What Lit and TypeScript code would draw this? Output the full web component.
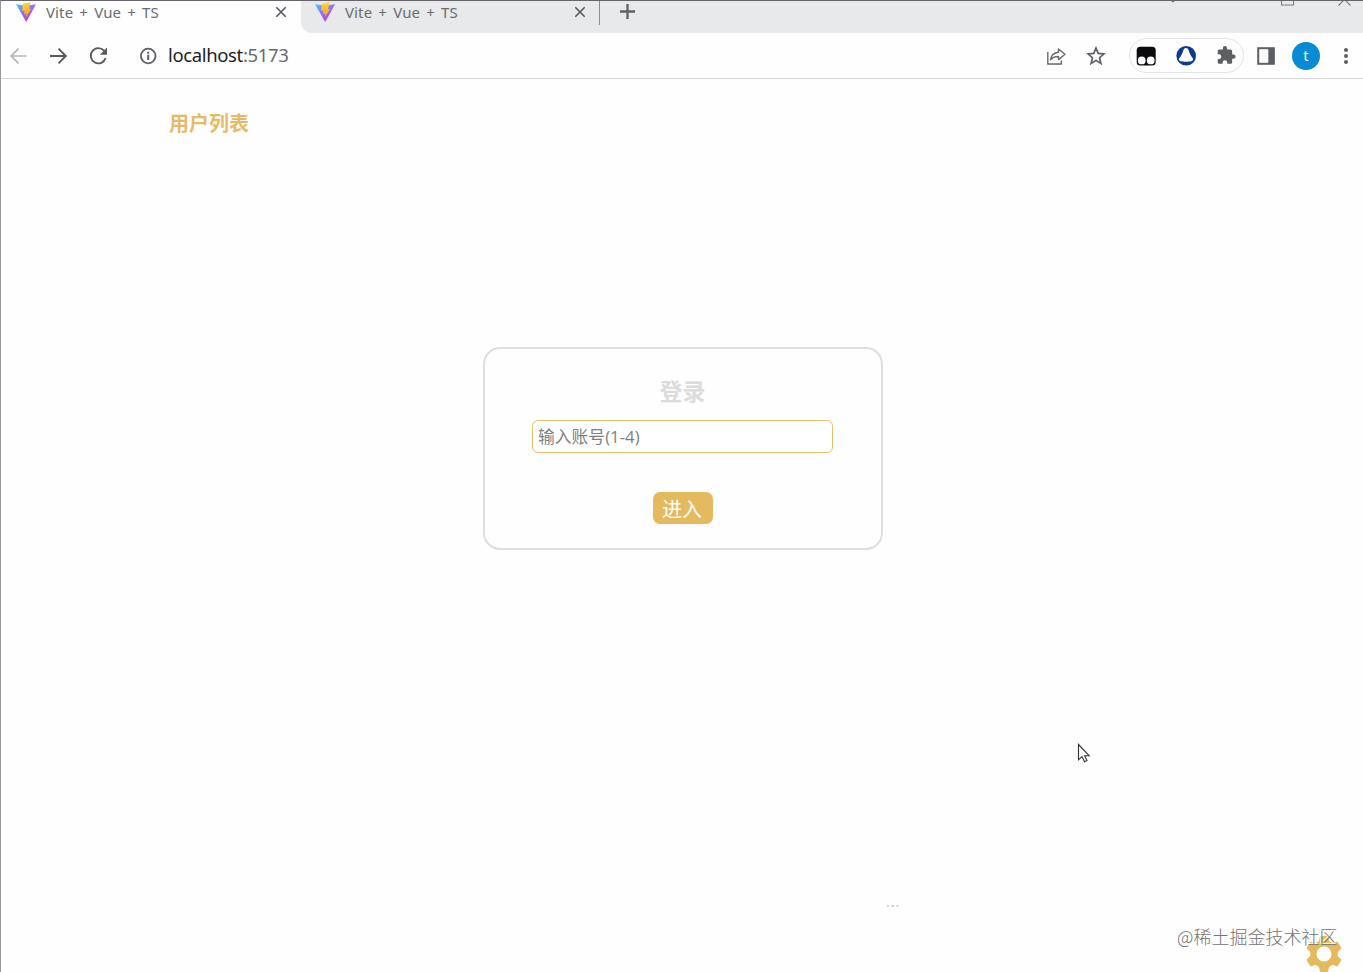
import { LitElement, html, css, svg } from "lit";
import { customElement, property } from "lit/decorators.js";

@customElement("vite-tab")
class ViteTab extends LitElement {
  @property() label = "";

  static styles = css`
    :host { display: flex; align-items: center; box-sizing: border-box; height: 22px; font: 15px/22px "Noto Sans", sans-serif; color: #696c70; }
    .logo { width: 22px; height: 22px; flex: none; }
    .title { flex: 1; margin-left: 9px; white-space: nowrap; letter-spacing: 0.12px; word-spacing: 2.1px; }
    .close { width: 12px; height: 12px; flex: none; }
  `;

  render() {
    return html`
      <svg class="logo" viewBox="0 0 22 22">
        <defs>
          <linearGradient id="body" x1="0" y1="0" x2=".65" y2="1">
            <stop offset="0" stop-color="#41c7ff" /><stop offset=".5" stop-color="#9170ff" /><stop offset="1" stop-color="#bd34d6" />
          </linearGradient>
          <linearGradient id="bolt" x1=".4" y1="0" x2=".6" y2="1">
            <stop offset="0" stop-color="#ffd43a" /><stop offset="1" stop-color="#f9a41b" />
          </linearGradient>
        </defs>
        <path d="M1 3.2 L11 4.7 L21 3.2 L11.2 21 Z" fill="url(#body)" />
        <path d="M15.5 1.2 L8 2.8 L7 9.8 L9.6 9.4 L9 13.2 L11.4 12.4 L10.7 16.4 L16.4 7.8 L14 8.2 Z" fill="url(#bolt)" />
      </svg>
      <span class="title">${this.label}</span>
      <svg class="close" viewBox="0 0 12 12"><path d="M1.3 1.3 L10.7 10.7 M10.7 1.3 L1.3 10.7" stroke="#55585c" stroke-width="1.6" /></svg>
    `;
  }
}

@customElement("app-root")
class AppRoot extends LitElement {
  static styles = css`
    :host { display: block; height: 972px; overflow: hidden; position: relative; font-family: "Noto Sans", "Noto Sans CJK SC", sans-serif; }
    * { box-sizing: border-box; }
    svg { display: block; flex: none; }
    .window { height: 972px; display: flex; flex-direction: column; border-top: 1px solid #66646a; border-left: 1px solid #98979b; background: #fefefe; }
    .tabs { display: flex; height: 32px; flex: none; }
    .active { width: 300px; padding: 0 14px 0 14px; }
    .strip { flex: 1; display: flex; background: #e8e9eb; border-bottom-left-radius: 11px; }
    .second { width: 298px; padding: 0 13px 0 13px; }
    .divider { width: 1px; height: 24px; background: #8b8d90; }
    .plus { margin: 2px 0 0 19px; }
    .controls { margin-left: auto; }
    .toolbar { display: flex; align-items: center; height: 46px; flex: none; border-bottom: 1px solid #d5d6d8; padding: 0 14px 0 7px; }
    .nav { display: flex; gap: 20px; }
    .info { margin-left: 31px; }
    .url { margin: 0 0 2px 11px; font: 18.5px/30px "Noto Sans", sans-serif; color: #202124; letter-spacing: -0.36px; white-space: nowrap; }
    .port { color: #67696d; }
    .actions { margin-left: auto; display: flex; align-items: center; }
    .share { margin-right: 20px; }
    .extensions { display: flex; align-items: center; gap: 20px; width: 115px; height: 35px; margin: 0 12px 0 23px; padding: 0 6px; border: 1px solid #e2e3e6; border-radius: 18px; }
    .avatar { width: 28px; height: 28px; margin: 0 23px 0 16px; border-radius: 50%; background: #078bd5; color: #fff; font: 15px/27px "Noto Sans", sans-serif; text-align: center; }
    .page { flex: 1; min-height: 0; display: flex; flex-direction: column; }
    .heading { margin: 28px 0 0 168px; font: 700 20px/32px "Noto Sans CJK SC", sans-serif; color: #e5bb67; }
    .card { width: 400px; height: 203px; margin: 208px 0 0 482px; border: 2px solid #dedede; border-radius: 17px; display: flex; flex-direction: column; align-items: center; padding-top: 24px; }
    .title { margin-right: 1px; font: 700 23px/34px "Noto Sans CJK SC", sans-serif; color: #dcdcdc; }
    .field { width: 301px; height: 33px; margin: 13px 1px 0 0; padding: 0 5px 1px; border: 1px solid #e8bf69; border-radius: 6px; outline: 0; background: #fff; font: 16.8px/30px "Open Sans", "Noto Sans CJK SC", sans-serif; color: #555; }
    .field::placeholder { color: #7f7f7f; opacity: 1; font-weight: 400; }
    .enter { width: 60px; height: 32px; margin-top: 39px; padding: 2px 2px 0 0; border: 0; border-radius: 7px; background: #e5b95e; color: #fff; font: 400 20px/30px "Noto Sans CJK SC", sans-serif; }
    .cursor { position: absolute; left: 1077px; top: 743px; }
    .dots { position: absolute; left: 886px; top: 904px; }
    .gear { position: absolute; left: 1306px; top: 936px; }
    .watermark { position: absolute; left: 1177px; top: 923px; font: 300 18px/27px "Noto Sans CJK SC", sans-serif; color: #737373; text-shadow: -1px -1px 0 #fff; white-space: nowrap; }
  `;

  private gearTeeth = [0, 60, 120, 180, 240, 300];

  render() {
    return html`
      <div class="window">
        <div class="tabs">
          <vite-tab class="active" label="Vite + Vue + TS"></vite-tab>
          <div class="strip">
            <vite-tab class="second" label="Vite + Vue + TS"></vite-tab>
            <div class="divider"></div>
            <svg class="plus" width="17" height="17" viewBox="0 0 17 17"><path d="M1 8.5h15M8.5 1v15" stroke="#5f6266" stroke-width="2.3" /></svg>
            <svg class="controls" width="193" height="6" viewBox="0 0 193 6" fill="none" stroke="#7d7d80">
              <path d="M1 -1 L3 1 L5 -1 M111.5 0V4h12V0 M168.5 4.5 L174.5 -1.5 L180.5 4.5" stroke-width="1.1" />
            </svg>
          </div>
        </div>
        <div class="toolbar">
          <div class="nav">
            <svg width="20" height="20" viewBox="0 0 20 20" fill="none" stroke="#b4b5b7" stroke-width="1.7"><path d="M18.5 10H3.2M10.5 2.7L3.2 10l7.3 7.3" /></svg>
            <svg width="20" height="20" viewBox="0 0 20 20" fill="none" stroke="#58595d" stroke-width="1.9"><path d="M2 10h15.8M10.5 2.7l7.3 7.3-7.3 7.3" /></svg>
            <svg width="20" height="20" viewBox="0 0 20 20"><path d="M16 4.7A7.6 7.6 0 1 0 17.6 12" fill="none" stroke="#58595d" stroke-width="1.9" /><path d="M19 1.6v7.2h-7.2z" fill="#58595d" /></svg>
          </div>
          <svg class="info" width="18" height="18" viewBox="0 0 18 18"><circle cx="9.2" cy="9" r="7.3" fill="none" stroke="#5d5f63" stroke-width="1.8" /><path d="M9.2 7.8v5.2M9.2 4.8v1.9" stroke="#5d5f63" stroke-width="2" /></svg>
          <div class="url">localhost<span class="port">:5173</span></div>
          <div class="actions">
            <svg class="share" width="20" height="20" viewBox="0 0 20 20" fill="none" stroke="#66686c" stroke-width="1.4"><path d="M1.8 6V18H15.4V14.5" /><path d="M12.5 3l6.5 5.3-6.5 5.3v-3.1c-3.8 0-6.3.9-8 3.4.5-4.5 3.2-7.2 8-7.7z" stroke-linejoin="round" /></svg>
            <svg width="20" height="20" viewBox="0 0 20 20"><path d="M10 2l2.2 5.4 5.8.5-4.4 3.8 1.3 5.7L10 14.4l-4.9 3 1.3-5.7L2 7.9l5.8-.5z" fill="none" stroke="#5d5f63" stroke-width="1.7" /></svg>
            <div class="extensions">
              <svg width="20" height="20" viewBox="0 0 20 20"><rect x=".7" y=".7" width="19" height="18.8" rx="3.5" fill="#0b0b0d" /><circle cx="5.7" cy="14.4" r="3.9" fill="#fff" /><circle cx="14.7" cy="14.4" r="3.9" fill="#fff" /></svg>
              <svg width="20" height="20" viewBox="0 0 20 20"><circle cx="10.2" cy="9.8" r="9.8" fill="#083b91" /><path d="M10 2c1.6 0 2.3 1 2.9 2.9.7 2.4 1.7 4.4 3.7 7.1 1 1.5.3 3-1.3 3.3-2.5.6-8.1.6-10.6 0-1.6-.3-2.3-1.8-1.3-3.3 2-2.7 3-4.7 3.7-7.1C7.7 3 8.4 2 10 2z" fill="#fff" /></svg>
              <svg width="20" height="20" viewBox="0 1 23.5 23.5"><path d="M20.5 11H19V7c0-1.1-.9-2-2-2h-4V3.5a2.5 2.5 0 0 0-5 0V5H4c-1.1 0-2 .9-2 2v3.8h1.5a2.7 2.7 0 0 1 0 5.4H2V20c0 1.1.9 2 2 2h3.8v-1.5a2.7 2.7 0 0 1 5.4 0V22H17c1.1 0 2-.9 2-2v-4h1.5a2.5 2.5 0 0 0 0-5z" fill="#5d5f63" /></svg>
            </div>
            <svg width="20" height="20" viewBox="0 0 20 20"><rect x="2.2" y="2.2" width="15.6" height="15.6" fill="none" stroke="#5d5f63" stroke-width="2" /><path d="M12.3 2h6v16h-6z" fill="#5d5f63" /></svg>
            <div class="avatar">t</div>
            <svg width="6" height="20" viewBox="0 0 6 20" fill="#5d5f63"><circle cx="3" cy="4" r="2" /><circle cx="3" cy="10" r="2" /><circle cx="3" cy="16" r="2" /></svg>
          </div>
        </div>
        <main class="page">
          <div class="heading">用户列表</div>
          <section class="card">
            <div class="title">登录</div>
            <input class="field" placeholder="输入账号(1-4)" />
            <button class="enter">进入</button>
          </section>
        </main>
      </div>
      <svg class="cursor" width="14" height="21" viewBox="0 0 14 21"><path d="M1.5 1.5v15.3l3.4-3.2 2.7 5.2 2.4-1.2-2.4-4.9h4.5z" fill="#fff" stroke="#303036" stroke-width="1.1" /></svg>
      <svg class="dots" width="14" height="4" viewBox="0 0 14 4" fill="#d0d0d0"><path d="M1 1h2v2H1zM5.5 1h2.5v2H5.5zM10.5 1h2v2h-2z" /></svg>
      <svg class="gear" width="36" height="36" viewBox="-18 -18 36 36" fill="#e5b95e">
        <circle r="13.8" />
        ${this.gearTeeth.map((angle) => svg`<path d="M-5.5 -11 L-4.2 -17 Q-4 -18 -3 -18 H3 Q4 -18 4.2 -17 L5.5 -11z" transform="rotate(${angle})" />`)}
        <circle r="7.5" fill="#fefefe" />
      </svg>
      <div class="watermark">@稀土掘金技术社区</div>
    `;
  }
}
